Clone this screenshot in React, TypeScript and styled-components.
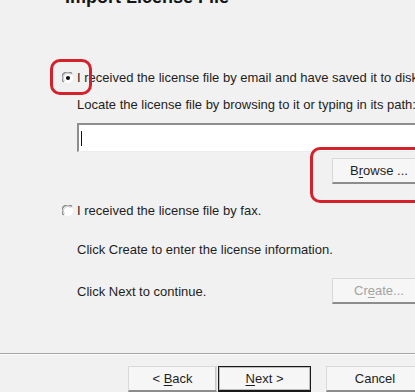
import React from "react";
import styled, { createGlobalStyle } from "styled-components";

const GlobalStyle = createGlobalStyle`
  html, body {
    margin: 0;
    padding: 0;
    background: #f1f1f1;
    overflow: hidden;
  }
  body {
    font-family: "Liberation Sans", Arial, sans-serif;
  }
`;

const Window = styled.div`
  width: 415px;
  height: 392px;
  overflow: hidden;
  background: #f1f1f1;
  color: #1e1e1e;
  font-size: 13px;
  display: flex;
  flex-direction: column;
`;

const Title = styled.h1`
  margin: -12px 0 0 65px;
  font-size: 18px;
  line-height: 18px;
  font-weight: bold;
  color: #151515;
  white-space: nowrap;
`;

const Content = styled.div`
  margin-top: 64px;
  padding-left: 62px;
  display: flex;
  flex-direction: column;
`;

const OptionRow = styled.div<{ $gap: number }>`
  margin-top: ${(p) => p.$gap}px;
  height: 16px;
  line-height: 16px;
  display: flex;
  align-items: center;
  gap: 3px;
  white-space: nowrap;
`;

const RadioWrap = styled.span`
  position: relative;
  width: 12px;
  height: 12px;
  display: inline-flex;
`;

const Highlight = styled.span<{ $top: number; $left: number; $right: number; $bottom: number }>`
  position: absolute;
  top: ${(p) => p.$top}px;
  left: ${(p) => p.$left}px;
  right: ${(p) => p.$right}px;
  bottom: ${(p) => p.$bottom}px;
  border: 3px solid #d5212c;
  border-radius: 10px;
  pointer-events: none;
`;

const Indent = styled.div`
  padding-left: 15px;
  width: 349px;
  display: flex;
  flex-direction: column;
`;

const Line = styled.div<{ $gap: number }>`
  margin-top: ${(p) => p.$gap}px;
  height: 16px;
  line-height: 16px;
  white-space: nowrap;
`;

const PathField = styled.div`
  margin-top: 10px;
  height: 29px;
  box-sizing: border-box;
  background: #fff;
  border-top: 2px solid #8e8e8e;
  border-left: 2px solid #8e8e8e;
  border-right: 1px solid #e4e4e4;
  border-bottom: 1px solid #ececec;
  display: flex;
  align-items: center;
  padding-left: 2px;
`;

const Caret = styled.span`
  width: 1px;
  height: 15px;
  background: #111;
`;

const ButtonRow = styled.div<{ $gap: number }>`
  margin-top: ${(p) => p.$gap}px;
  display: flex;
  align-items: center;
  justify-content: space-between;
  white-space: nowrap;
`;

const Push = styled.span`
  position: relative;
  display: inline-flex;
  margin-left: auto;
`;

const Button = styled.button<{ $width: number; $default?: boolean }>`
  width: ${(p) => p.$width}px;
  height: 26px;
  box-sizing: border-box;
  padding: 0;
  font-family: "Liberation Sans", Arial, sans-serif;
  font-size: 13px;
  color: ${(p) => (p.disabled ? "#a3a3a3" : "#1e1e1e")};
  background: #f6f6f6;
  border: 1px solid ${(p) => (p.$default ? "#1a1a1a" : "#d9d9d9")};
  border-bottom: 2px solid ${(p) => (p.$default ? "#1a1a1a" : "#8c8c8c")};
  box-shadow: ${(p) => (p.$default ? "inset 0 0 0 1px #bdbdbd" : "inset -1px 0 0 #c8c8c8")};
  display: flex;
  align-items: center;
  justify-content: center;
  white-space: nowrap;

  u {
    text-decoration: underline;
    text-underline-offset: 2px;
  }
`;

const Footer = styled.div`
  margin-top: auto;
  border-top: 1px solid #a6a6a6;
  box-shadow: inset 0 1px 0 #fbfbfb;
  padding: 12px 0 0 128px;
  display: flex;
`;

const FooterSlot = styled.div<{ $gap: number }>`
  margin-left: ${(p) => p.$gap}px;
  display: flex;
`;

function Radio({ checked }: { checked?: boolean }) {
  return (
    <svg width="12" height="12" viewBox="0 0 12 12">
      <circle cx="6" cy="6" r="5.3" fill="#fff" />
      <path d="M1.6 10 A5.6 5.6 0 0 1 10 1.6" fill="none" stroke="#8a8a8a" strokeWidth="1.4" />
      <path d="M2.7 8.9 A4.2 4.2 0 0 1 8.9 2.7" fill="none" stroke="#c4c4c4" strokeWidth="1" />
      <path d="M10.2 2 A5.6 5.6 0 0 1 2 10.2" fill="none" stroke="#ededed" strokeWidth="1" />
      {checked && <circle cx="6" cy="6" r="2.1" fill="#111" />}
    </svg>
  );
}

export default function App() {
  return (
    <Window>
      <GlobalStyle />
      <Title>Import License File</Title>
      <Content>
        <OptionRow $gap={0}>
          <RadioWrap>
            <Radio checked />
            <Highlight $top={-13} $left={-12} $right={-18} $bottom={-11} />
          </RadioWrap>
          <span>I received the license file by email and have saved it to disk</span>
        </OptionRow>
        <Indent>
          <Line $gap={11}>Locate the license file by browsing to it or typing in its path:</Line>
          <PathField>
            <Caret />
          </PathField>
          <ButtonRow $gap={6}>
            <Push>
              <Button $width={94}>
                B<u>r</u>owse ...
              </Button>
              <Highlight $top={-11} $left={-22} $right={-8} $bottom={-19} />
            </Push>
          </ButtonRow>
        </Indent>
        <OptionRow $gap={19}>
          <RadioWrap>
            <Radio />
          </RadioWrap>
          <span>I received the license file by fax.</span>
        </OptionRow>
        <Indent>
          <Line $gap={23}>Click Create to enter the license information.</Line>
          <ButtonRow $gap={20}>
            <span>Click Next to continue.</span>
            <Button $width={94} disabled>
              Cr<u>e</u>ate...
            </Button>
          </ButtonRow>
        </Indent>
      </Content>
      <Footer>
        <FooterSlot $gap={0}>
          <Button $width={89}>
            &lt;&nbsp;<u>B</u>ack
          </Button>
        </FooterSlot>
        <FooterSlot $gap={1}>
          <Button $width={93} $default>
            <u>N</u>ext&nbsp;&gt;
          </Button>
        </FooterSlot>
        <FooterSlot $gap={15}>
          <Button $width={98}>Cancel</Button>
        </FooterSlot>
      </Footer>
    </Window>
  );
}
